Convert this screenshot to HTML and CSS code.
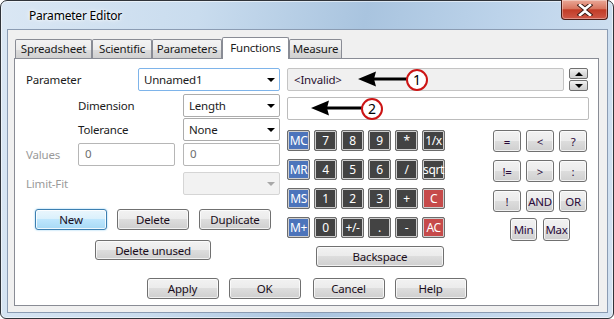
FILE: index.html
```html
<!DOCTYPE html>
<html lang="en">
  <head>
    <meta charset="UTF-8" />
    <meta name="viewport" content="width=device-width, initial-scale=1.0" />
    <title>Parameter Editor</title>
    <link rel="stylesheet" href="styles.css">
  </head>
  <body>
    <div class="window">
      <div class="titlebar">
        <span class="title">Parameter Editor</span>
        <div class="close">
          <svg width="16" height="12" viewBox="0 0 16 12">
            <path d="M3 1 L8 5 L13 1 M3 11 L8 7 L13 11" stroke="#3a1a14" stroke-width="4.5" fill="none" stroke-linecap="square" />
            <path d="M3 1 L8 5 L13 1 M3 11 L8 7 L13 11" stroke="#ffffff" stroke-width="2.6" fill="none" stroke-linecap="square" />
          </svg>
        </div>
      </div>
      <div class="client">
        <div class="tabs">
          <div class="tab tab-spread">Spreadsheet</div>
          <div class="tab tab-sci">Scientific</div>
          <div class="tab tab-params">Parameters</div>
          <div class="tab tab-func selected">Functions</div>
          <div class="tab tab-measure">Measure</div>
        </div>
        <div class="page">
          <div class="page-main">
            <!-- parameter definition -->
            <div class="params">
              <div class="row">
                <span class="lbl lbl-param">Parameter</span>
                <div class="select focused wide">Unnamed1<span class="caret"></span></div>
              </div>
              <div class="row row-dim">
                <span class="lbl lbl-sub">Dimension</span>
                <div class="select">Length<span class="caret"></span></div>
              </div>
              <div class="row row-tol">
                <span class="lbl lbl-sub">Tolerance</span>
                <div class="select">None<span class="caret"></span></div>
              </div>
              <div class="row row-values">
                <span class="lbl lbl-short disabled">Values</span>
                <div class="input">0</div>
                <div class="input">0</div>
              </div>
              <div class="row row-fit">
                <span class="lbl lbl-long disabled">Limit-Fit</span>
                <div class="select off"><span class="caret"></span></div>
              </div>
              <div class="row row-actions">
                <div class="btn default">New</div>
                <div class="btn">Delete</div>
                <div class="btn">Duplicate</div>
              </div>
              <div class="row row-unused">
                <div class="btn btn-unused">Delete unused</div>
              </div>
            </div>

            <!-- expression side -->
            <div class="expr">
              <div class="expr-top">
                <div class="field readonly">&lt;Invalid&gt;</div>
                <div class="spin">
                  <div class="spin-btn"><span class="tri up"></span></div>
                  <div class="spin-btn"><span class="tri down"></span></div>
                </div>
              </div>
              <div class="field entry"></div>
              <div class="pads">
                <div class="keypad">
                  <div class="key mem">MC</div>
                  <div class="key">7</div>
                  <div class="key">8</div>
                  <div class="key">9</div>
                  <div class="key">*</div>
                  <div class="key">1/x</div>
                  <div class="key mem">MR</div>
                  <div class="key">4</div>
                  <div class="key">5</div>
                  <div class="key">6</div>
                  <div class="key">/</div>
                  <div class="key">sqrt</div>
                  <div class="key mem">MS</div>
                  <div class="key">1</div>
                  <div class="key">2</div>
                  <div class="key">3</div>
                  <div class="key">+</div>
                  <div class="key clear">C</div>
                  <div class="key mem">M+</div>
                  <div class="key">0</div>
                  <div class="key">+/-</div>
                  <div class="key">.</div>
                  <div class="key">-</div>
                  <div class="key clear">AC</div>
                  <div class="btn backspace">Backspace</div>
                </div>
                <div class="ops">
                  <div class="ops-grid">
                    <div class="btn op">=</div>
                    <div class="btn op">&lt;</div>
                    <div class="btn op">?</div>
                    <div class="btn op">!=</div>
                    <div class="btn op">&gt;</div>
                    <div class="btn op">:</div>
                    <div class="btn op">!</div>
                    <div class="btn op">AND</div>
                    <div class="btn op">OR</div>
                  </div>
                  <div class="ops-minmax">
                    <div class="btn op">Min</div>
                    <div class="btn op">Max</div>
                  </div>
                </div>
              </div>
            </div>
          </div>

          <div class="footer">
            <div class="btn btn-dlg">Apply</div>
            <div class="btn btn-dlg">OK</div>
            <div class="btn btn-dlg btn-cancel">Cancel</div>
            <div class="btn btn-dlg">Help</div>
          </div>

          <!-- annotation arrows -->
          <svg class="callout callout-1" width="78" height="28" viewBox="0 0 78 28">
            <path d="M3 12 L21 4.5 L19 12 L21 19.5 Z" fill="#000" />
            <line x1="19" y1="12" x2="52" y2="12" stroke="#000" stroke-width="3" />
            <circle cx="62" cy="13" r="10" fill="#fff" stroke="#cc1414" stroke-width="2" />
            <text x="62" y="18" text-anchor="middle" class="callout-num">1</text>
          </svg>
          <svg class="callout callout-2" width="78" height="28" viewBox="0 0 78 28">
            <path d="M3 12 L21 4.5 L19 12 L21 19.5 Z" fill="#000" />
            <line x1="19" y1="12" x2="54" y2="12" stroke="#000" stroke-width="3" />
            <circle cx="64" cy="13" r="10" fill="#fff" stroke="#cc1414" stroke-width="2" />
            <text x="64" y="18" text-anchor="middle" class="callout-num">2</text>
          </svg>
        </div>
      </div>
    </div>
  </body>
</html>
```

FILE: styles.css
```css
* {
  box-sizing: border-box;
  --frame-border: #30343a;
  --tab-border: #898c95;
  --btn-border: #707070;
  --key-dark: #434343;
  --key-blue: #4c74bb;
  --key-red: #c64a4a;
  --disabled: #9a9a9a;
}
body {
  margin: 0;
  background: #fff;
  font-family: "Noto Sans", sans-serif;
  font-size: 11.5px;
  letter-spacing: -0.2px;
  color: #1b1b1b;
}

/* window frame */
.window {
  width: 614px;
  height: 319px;
  border: 1px solid var(--frame-border);
  border-radius: 7px 7px 6px 6px;
  padding: 0 5px 5px 6px;
  background: linear-gradient(100deg, #dae7f4 0%, #c9dcee 30%, #a9c4df 55%, #bcd3ea 75%, #d4e3f2 100%);
  box-shadow: inset 0 0 0 1px rgba(255, 255, 255, 0.55);
  display: flex;
  flex-direction: column;
}
.titlebar {
  height: 28px;
  display: flex;
  justify-content: space-between;
  align-items: flex-start;
}
.title {
  padding: 6px 0 0 22px;
  font-size: 12px;
  color: #000;
  text-shadow: 0 0 6px #fff, 0 0 3px #fff;
}
.close {
  width: 47px;
  height: 20px;
  margin-top: -1px;
  border: 1px solid #4a1c16;
  border-top: none;
  border-radius: 0 0 4px 4px;
  background: linear-gradient(#eaa897, #d87660 45%, #c23c27 52%, #cf5848 100%);
  box-shadow: inset 0 0 0 1px rgba(255, 255, 255, 0.35);
  display: flex;
  align-items: center;
  justify-content: center;
}
.client {
  flex: 1;
  border: 1px solid #8b9cb3;
  background: #f0f0f0;
  padding: 7px 8px 6px 6px;
  display: flex;
  flex-direction: column;
}

/* tabs */
.tabs {
  display: flex;
  align-items: flex-end;
  height: 22px;
  padding-left: 1px;
}
.tab {
  height: 20px;
  border: 1px solid var(--tab-border);
  border-bottom: none;
  border-radius: 2px 2px 0 0;
  background: linear-gradient(#f3f3f3, #ebebeb 50%, #dddddd 50%, #cfcfcf);
  text-align: center;
  line-height: 18px;
}
.tab.selected {
  height: 22px;
  background: #fff;
  position: relative;
  z-index: 1;
  line-height: 19px;
}
.tab-spread { width: 77px; }
.tab-sci { width: 60px; }
.tab-params { width: 70px; }
.tab-func { width: 67px; }
.tab-measure { width: 53px; }

.page {
  position: relative;
  height: 248px;
  margin-top: -1px;
  border: 1px solid var(--tab-border);
  background: #fff;
  padding: 9px 0 6px 0;
  display: flex;
  flex-direction: column;
}
.page-main {
  display: flex;
  gap: 7px;
  padding-left: 11px;
}

/* left column */
.params {
  width: 254px;
  display: flex;
  flex-direction: column;
}
.row {
  display: flex;
  align-items: center;
}
.row-dim { margin-top: 3px; }
.row-tol { margin-top: 1px; }
.row-values { margin-top: 2px; gap: 8px; }
.row-fit { margin-top: 6px; }
.row-actions { margin-top: 14px; padding-left: 9px; gap: 10px; }
.row-unused { margin-top: 10px; padding-left: 69px; }
.lbl-param { width: 112px; }
.lbl-sub { width: 105px; margin-left: 52px; }
.lbl-short { width: 44px; }
.lbl-long { width: 157px; }
.disabled { color: var(--disabled); }

.select {
  width: 97px;
  height: 23px;
  border: 1px solid #acacac;
  border-radius: 2px;
  background: #fff;
  padding-left: 5px;
  display: flex;
  align-items: center;
}
.select.wide { width: 142px; }
.select.focused { border-color: #7eb4ea; }
.select.off {
  background: #f2f2f2;
  border-color: #d5d5d5;
}
.caret {
  margin-left: auto;
  margin-right: 4px;
  width: 0;
  height: 0;
  border-left: 4px solid transparent;
  border-right: 4px solid transparent;
  border-top: 4px solid #000;
}
.select.off .caret { border-top-color: #a8a8a8; }
.input {
  width: 97px;
  height: 23px;
  border: 1px solid #b6b6b6;
  border-radius: 2px;
  padding-left: 6px;
  line-height: 20px;
  color: #6d6d6d;
}

/* buttons */
.btn {
  height: 21px;
  border: 1px solid var(--btn-border);
  border-radius: 3px;
  background: linear-gradient(#f2f2f2, #ebebeb 50%, #dddddd 50%, #cfcfcf);
  box-shadow: inset 0 0 0 1px rgba(255, 255, 255, 0.7);
  display: flex;
  align-items: center;
  justify-content: center;
  color: #1a0d1a;
  width: 72px;
}
.btn.default {
  border-color: #3c7fb1;
  background: linear-gradient(#eaf6fd, #d9f0fc 50%, #bee6fd 50%, #a7d9f5);
  box-shadow: inset 0 0 0 1px rgba(255, 255, 255, 0.8), 0 0 2px #7ec4ee;
}
.btn-unused { width: 116px; height: 20px; }

/* right column */
.expr {
  display: flex;
  flex-direction: column;
}
.expr-top {
  display: flex;
  align-items: center;
  gap: 5px;
}
.field {
  height: 23px;
  border: 1px solid #bcbcbc;
  border-radius: 2px;
  padding-left: 6px;
  display: flex;
  align-items: center;
}
.field.readonly {
  width: 277px;
  background: #f0f0f0;
  border-color: #c4c4c4;
  color: #2a1030;
}
.field.entry {
  width: 302px;
  margin-top: 6px;
}
.spin {
  display: flex;
  flex-direction: column;
  gap: 1px;
}
.spin-btn {
  width: 19px;
  height: 11px;
  border: 1px solid var(--btn-border);
  border-radius: 2px;
  background: linear-gradient(#f2f2f2, #dddddd 50%, #cfcfcf);
  display: flex;
  align-items: center;
  justify-content: center;
}
.tri {
  width: 0;
  height: 0;
  border-left: 4px solid transparent;
  border-right: 4px solid transparent;
}
.tri.up { border-bottom: 4px solid #000; }
.tri.down { border-top: 4px solid #000; }

.pads {
  display: flex;
  margin-top: 10px;
}
.keypad {
  display: grid;
  grid-template-columns: repeat(6, 23px);
  grid-auto-rows: 21px;
  column-gap: 4px;
  row-gap: 8px;
}
.key {
  border: 1px solid #6c6c6c;
  border-radius: 2px;
  background: var(--key-dark);
  box-shadow: inset 0 0 0 1px #cfcfcf;
  color: #fff;
  font-size: 12px;
  display: flex;
  align-items: center;
  justify-content: center;
  letter-spacing: -0.4px;
}
.key.mem { background: var(--key-blue); }
.key.clear { background: var(--key-red); }
.btn.backspace {
  grid-column: 2 / 7;
  width: auto;
  height: 21px;
  margin: 0 1px 0 2px;
}
.ops {
  margin-left: 48px;
  display: flex;
  flex-direction: column;
  align-items: center;
}
.ops-grid {
  display: grid;
  grid-template-columns: repeat(3, 28px);
  grid-auto-rows: 22px;
  column-gap: 5px;
  row-gap: 8px;
}
.btn.op {
  width: auto;
  height: auto;
  color: #2a0a3a;
  letter-spacing: -0.3px;
}
.ops-minmax {
  display: flex;
  gap: 6px;
  margin-top: 6px;
}
.ops-minmax .btn.op {
  width: 27px;
  height: 23px;
}

/* footer */
.footer {
  margin-top: auto;
  display: flex;
  justify-content: center;
  gap: 10px;
}
.btn-dlg { width: 72px; }
.btn-cancel { margin-left: 2px; }

/* callouts */
.callout {
  position: absolute;
}
.callout-1 { left: 340px; top: 8px; }
.callout-2 { left: 293px; top: 37px; }
.callout-num {
  font-family: "Noto Sans", sans-serif;
  font-size: 14px;
  fill: #000;
}
```
